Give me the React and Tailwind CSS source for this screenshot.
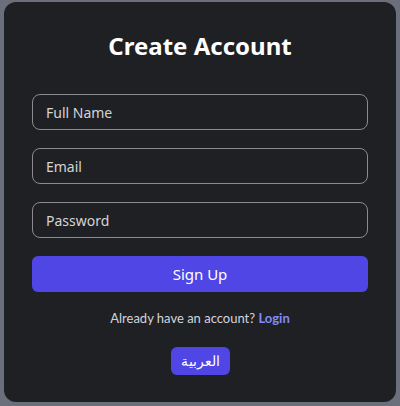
import React, { useState } from "react";

export default function App() {
  const [name, setName] = useState("");
  const [email, setEmail] = useState("");
  const [password, setPassword] = useState("");

  const inputCls =
    "block w-full h-[36px] rounded-lg border border-[#8b8b8f] bg-transparent px-[13px] text-[14px] text-gray-100 placeholder:text-[#d4d4d8] outline-none";

  return (
    <div className="min-h-[406px] bg-[#6b6f7b] pt-[2px] pb-[4px] px-[4px] font-['Noto_Sans',sans-serif]">
      <div className="h-[400px] rounded-xl bg-[#1f2024] px-7 pt-7">
        <h1 className="text-center text-2xl leading-8 font-bold text-white">Create Account</h1>

        <div className="mt-8 flex flex-col gap-[18px]">
          <input className={inputCls} placeholder="Full Name" value={name} onChange={(e) => setName(e.target.value)} />
          <input className={inputCls} placeholder="Email" value={email} onChange={(e) => setEmail(e.target.value)} />
          <input
            className={inputCls}
            type="password"
            placeholder="Password"
            value={password}
            onChange={(e) => setPassword(e.target.value)}
          />
          <button className="h-[36px] w-full rounded-md bg-[#4f46e5] text-[15px] text-white">Sign Up</button>
        </div>

        <p className="mt-4 text-center font-['Lato',sans-serif] text-[13px] leading-5 text-gray-300">
          Already have an account? <a className="font-bold text-[#818cf8]">Login</a>
        </p>

        <div className="mt-[19px] flex justify-center">
          <button className="h-[28px] rounded-md bg-[#4f46e5] px-[10px] text-[14px] leading-none text-white">العربية</button>
        </div>
      </div>
    </div>
  );
}
